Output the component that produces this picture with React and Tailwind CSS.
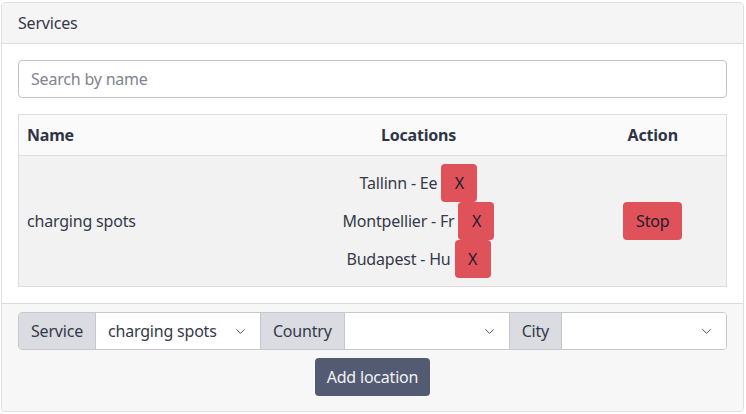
import { ChevronDown } from "lucide-react";

const locations = [
  { city: "Tallinn", country: "Ee" },
  { city: "Montpellier", country: "Fr" },
  { city: "Budapest", country: "Hu" },
];

function Addon({ children }) {
  return (
    <span className="flex items-center px-3 bg-[#dadce1] border-r border-[#c6c8d0] text-[#343a48]">
      {children}
    </span>
  );
}

function Select({ value }) {
  return (
    <div className="flex-1 flex items-center justify-between bg-white pl-3 pr-3 border-r border-[#c6c8d0] last:border-r-0">
      <span className="text-[#343a48]">{value}</span>
      <ChevronDown size={15} strokeWidth={1.6} className="text-[#4a5060]" />
    </div>
  );
}

export default function App() {
  return (
    <div
      className="bg-white pt-[2px] pb-[2px] pl-[1px] pr-[2px] text-[16px] tracking-[-0.2px] text-[#343a48]"
      style={{ fontFamily: '"Noto Sans", sans-serif' }}
    >
      <div className="border border-[#dfdfe2] rounded-[4px] overflow-hidden">
        <div className="bg-[#f5f5f5] border-b border-[#dcdcdf] px-4 py-2 leading-6">
          Services
        </div>

        <div className="bg-white p-4">
          <input
            placeholder="Search by name"
            className="w-full h-[38px] px-3 border border-[#c2c3cc] rounded-[4px] outline-none placeholder:text-[#80848f]"
          />

          <table className="w-full mt-4 border border-[#dcdde2] border-collapse table-fixed">
            <colgroup>
              <col className="w-[239px]" />
              <col className="w-[322px]" />
              <col />
            </colgroup>
            <thead>
              <tr className="bg-[#fafafa] border-b border-[#dcdde2]">
                <th className="text-left font-bold px-2 py-2 leading-6 text-[#2f3546]">Name</th>
                <th className="text-center font-bold px-2 py-2 leading-6 text-[#2f3546]">Locations</th>
                <th className="text-center font-bold px-2 py-2 leading-6 text-[#2f3546]">Action</th>
              </tr>
            </thead>
            <tbody>
              <tr className="bg-[#f2f2f2]">
                <td className="px-2 py-2 align-middle">charging spots</td>
                <td className="px-2 py-2">
                  <div className="flex flex-col items-center">
                    {locations.map((l) => (
                      <div key={l.city} className="flex items-center gap-1">
                        <span>
                          {l.city} - {l.country}
                        </span>
                        <button className="h-[38px] w-[36px] rounded-[4px] bg-[#e0525a] text-[#1b1d2a] leading-6">
                          X
                        </button>
                      </div>
                    ))}
                  </div>
                </td>
                <td className="px-2 py-2 text-center">
                  <button className="h-[38px] w-[59px] rounded-[4px] bg-[#e0525a] text-[#1b1d2a] leading-6">
                    Stop
                  </button>
                </td>
              </tr>
            </tbody>
          </table>
        </div>

        <div className="bg-[#f7f7f7] border-t border-[#dcdcdf] px-4 pt-2 pb-[15px]">
          <div className="flex h-[38px] border border-[#c6c8d0] rounded-[4px] overflow-hidden">
            <Addon>Service</Addon>
            <Select value="charging spots" />
            <Addon>Country</Addon>
            <Select value="" />
            <Addon>City</Addon>
            <Select value="" />
          </div>
          <div className="flex justify-center mt-2">
            <button className="h-[38px] px-3 rounded-[4px] bg-[#525b72] text-[#f2f2f4] leading-6">
              Add location
            </button>
          </div>
        </div>
      </div>
    </div>
  );
}
